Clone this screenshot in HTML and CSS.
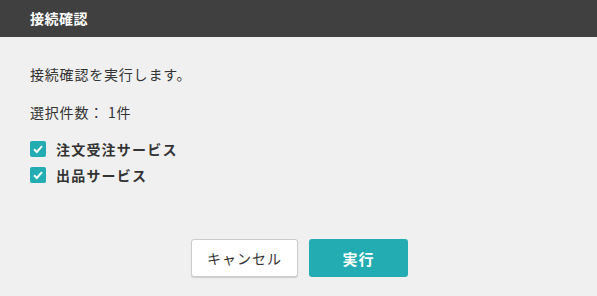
FILE: index.html
```html
<!DOCTYPE html>
<html lang="ja">
<head>
    <meta charset="UTF-8">
    <title>接続確認</title>
    <link rel="stylesheet" href="styles.css">
</head>
<body>
    <div class="dialog">
        <div class="header">接続確認</div>
        <div class="content">
            <p class="msg">接続確認を実行します。</p>
            <p class="count">選択件数： 1件</p>
            <label class="check">
                <span class="box">
                    <svg width="12" height="12" viewBox="0 0 12 12"><path d="M2 6.2 L4.8 9 L10 3.2" fill="none" stroke="#fff" stroke-width="2"/></svg>
                </span>
                注文受注サービス
            </label>
            <label class="check">
                <span class="box">
                    <svg width="12" height="12" viewBox="0 0 12 12"><path d="M2 6.2 L4.8 9 L10 3.2" fill="none" stroke="#fff" stroke-width="2"/></svg>
                </span>
                出品サービス
            </label>
        </div>
        <div class="btns">
            <button class="cancel">キャンセル</button>
            <button class="run">実行</button>
        </div>
    </div>
</body>
</html>
```
FILE: styles.css
```css
body{
    margin: 0;
    font-family: "Noto Sans CJK JP", "Noto Sans", sans-serif;
    background-color: #f0f0f0;
    color: #333;
}
.dialog{
    width: 597px;
    height: 296px;
}
.header{
    background-color: #404040;
    color: #fff;
    height: 37px;
    line-height: 36px;
    padding-left: 30px;
    font-size: 14px;
    font-weight: bold;
    letter-spacing: 0.5px;
}
.content{
    padding: 26px 30px 0;
    font-size: 14px;
    letter-spacing: 0.8px;
}
.msg{
    margin: 0;
    line-height: 22px;
}
.count{
    margin: 16px 0 13px;
    line-height: 22px;
}
.check{
    display: flex;
    align-items: center;
    gap: 10px;
    height: 26px;
    font-weight: bold;
    letter-spacing: 1.2px;
}
.box{
    width: 16px;
    height: 16px;
    background-color: #23adb2;
    border-radius: 2px;
    display: flex;
    align-items: center;
    justify-content: center;
}
.btns{
    display: flex;
    justify-content: center;
    gap: 11px;
    margin-top: 51px;
    padding-left: 2px;
}
button{
    font-family: inherit;
    font-size: 14px;
    height: 38px;
    border-radius: 3px;
    cursor: pointer;
    letter-spacing: 1px;
}
.cancel{
    width: 107px;
    background-color: #fff;
    border: 1px solid #ccc;
    box-shadow: 0 1px 1px rgba(0,0,0,0.15);
    color: #333;
}
.run{
    width: 99px;
    background-color: #23adb2;
    border: none;
    color: #fff;
    font-weight: bold;
    font-size: 15px;
}
```
